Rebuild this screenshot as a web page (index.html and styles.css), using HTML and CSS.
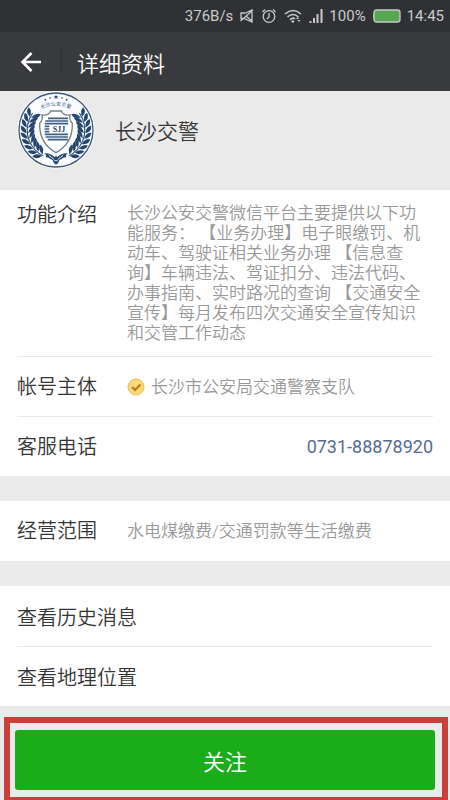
FILE: index.html
```
<!DOCTYPE html>
<html lang="zh-CN">

<head>
    <meta charset="UTF-8">
    <meta name="viewport" content="width=device-width, initial-scale=1">
    <title>详细资料</title>
    <link rel="stylesheet" href="styles.css">
</head>

<body>
    <div class="status-bar">
        <span>376B/s</span>
        <!-- mute -->
        <svg class="icon-mute" viewBox="0 0 16 16" width="16" height="16">
            <path d="M5.500 5H2v5.500h3L13 14V2L5.500 5.500M1.500 13L14 2M7.500 8.500L13 13" />
        </svg>
        <!-- alarm -->
        <svg class="icon-alarm" viewBox="0 0 16 16" width="16" height="16">
            <circle cx="8" cy="8.500" r="5.800" />
            <path d="M8 5v4L6 11M1.500 4L4 1.500M12 1.500L14.500 4" />
        </svg>
        <!-- wifi -->
        <svg class="icon-wifi" viewBox="0 0 20 16" width="20" height="16">
            <path d="M2 6Q10-1 18 6M4.500 9Q10 4 15.500 9M7 11.800Q10 9 12 11" />
            <path class="fill" d="M8 13.500l2-1.500 1.500 1.500L10 15zM13 11l1.500-2 1.500 2zM14.500 12h3L16 14z" />
        </svg>
        <!-- signal -->
        <svg class="icon-signal" viewBox="0 0 14 16" width="14" height="16">
            <path d="M1.500 15v-2M5 15v-5M8.500 15V6M12.500 15V1" />
        </svg>
        <span>100%</span>
        <!-- battery -->
        <svg class="icon-battery" viewBox="0 0 29 14" width="29" height="14">
            <path class="cap" d="M2 4Q0 7 2 10z" />
            <rect x="2" y="1" width="26" height="12" rx="2.500" />
        </svg>
        <span>14:45</span>
    </div>

    <header class="title-bar">
        <button class="back" type="button" aria-label="返回">
            <svg viewBox="0 0 22 22" width="22" height="22">
                <path d="M21 11H3M11.500 2L2.500 11l9 9" />
            </svg>
        </button>
        <h1>详细资料</h1>
    </header>

    <section class="profile">
        <svg class="avatar" viewBox="-117 -117 234 234" width="78" height="78">
            <defs>
                <g id="leaf">
                    <path d="M84 2Q78-19 62-20 63-3 84 2zM88 2Q89-18 104-22 108-4 88 2z" />
                    <path class="stem" d="M86 6V-12" />
                </g>
                <g id="branch">
                    <use href="#leaf" transform="rotate(-28)" />
                    <use href="#leaf" transform="rotate(-17)" />
                    <use href="#leaf" transform="rotate(-6)" />
                    <use href="#leaf" transform="rotate(5)" />
                    <use href="#leaf" transform="rotate(16)" />
                    <use href="#leaf" transform="rotate(27)" />
                    <use href="#leaf" transform="rotate(38)" />
                    <use href="#leaf" transform="rotate(49)" />
                    <use href="#leaf" transform="rotate(60)" />
                </g>
                <path id="arc" d="M-46-62Q0-84 46-62" />
            </defs>
            <circle class="halo" r="116" />
            <circle class="ring" r="111" />
            <use href="#branch" />
            <use href="#branch" transform="scale(-1 1)" />
            <path d="M0-106l2 5h5l-4 3 2 5-5-3-5 3 2-5-4-3h5z" />
            <circle cx="-18" cy="-96" r="2.500" />
            <circle cx="18" cy="-96" r="2.500" />
            <circle cx="-32" cy="-91" r="2.500" />
            <circle cx="32" cy="-91" r="2.500" />
            <text class="motto"><textPath href="#arc" startOffset="50%">长沙公安交警</textPath></text>
            <path class="shield" d="M-42-45Q-22-42-16-57H16Q22-42 42-45 38-32 49-20 51 40 0 68-51 40-49-20-38-32-42-45z" />
            <path class="lines" d="M-24-35H36M-32-27H36M-34-19H36M-34-11H-20M-34-3H-20M-34 5H-20M-34 13H36M-31 21H36M-25 29H36" />
            <text class="letters" x="9" y="6">SJJ</text>
            <path d="M-35 70Q-18 68-3 82L0 76 3 82Q18 68 35 70 27 76 31 82 20 81 16 88 10 87 7 98L0 104-7 98Q-10 87-16 88-20 81-31 82-27 76-35 70z" />
            <path class="vein" d="M-22 75L-5 89M22 75L5 89M-5 92H5" />
        </svg>
        <h2>长沙交警</h2>
    </section>

    <main>
        <section class="group">
            <div class="row row-intro">
                <h3>功能介绍</h3>
                <p>长沙公安交警微信平台主要提供以下功能服务： 【业务办理】电子眼缴罚、机动车、驾驶证相关业务办理 【信息查询】车辆违法、驾证扣分、违法代码、办事指南、实时路况的查询 【交通安全宣传】每月发布四次交通安全宣传知识和交管工作动态</p>
            </div>
            <div class="row">
                <h3>帐号主体</h3>
                <p class="verified">
                    <svg viewBox="0 0 18 18" width="18" height="18">
                        <circle cx="9" cy="9" r="8" />
                        <path d="M5 9l3 3 5.500-5.500" />
                    </svg>
                    长沙市公安局交通警察支队
                </p>
            </div>
            <div class="row">
                <h3>客服电话</h3>
                <a class="phone" href="tel:073188878920">0731-88878920</a>
            </div>
        </section>

        <section class="group">
            <div class="row">
                <h3>经营范围</h3>
                <p>水电煤缴费/交通罚款等生活缴费</p>
            </div>
        </section>

        <section class="group">
            <a class="row" href="#history">查看历史消息</a>
            <a class="row" href="#location">查看地理位置</a>
        </section>
    </main>

    <div class="follow">
        <button class="btn" type="button">关注</button>
    </div>
</body>

</html>
```

FILE: styles.css
```
* {
    box-sizing: border-box;
}

body {
    margin: 0;
    height: 100vh;
    overflow: hidden;
    background: #eaeaea;
    color: #353535;
    font-family: Roboto, 'Noto Sans CJK SC', sans-serif;
    font-weight: 350;
}

h1,
h2,
h3,
p {
    margin: 0;
    font-weight: 350;
}

a {
    color: inherit;
    text-decoration: none;
}

svg {
    flex: none;
    fill: none;
}

.status-bar {
    display: flex;
    align-items: center;
    justify-content: flex-end;
    gap: 6px;
    height: 32px;
    padding-right: 6px;
    background: #303135;
    color: #c9cacc;
    font-size: 15px;
    font-weight: 400;
}

.status-bar svg {
    stroke: #c9cacc;
    stroke-width: 1.3;
}

.status-bar .icon-wifi {
    stroke-width: 1.6;
}

.status-bar .icon-signal {
    stroke-width: 2;
}

.status-bar .fill,
.status-bar .cap {
    fill: #c9cacc;
    stroke: none;
}

.icon-battery rect {
    fill: #55a84f;
}

.title-bar {
    display: flex;
    align-items: center;
    height: 59px;
    background: #393a3e;
    color: #fff;
}

.back {
    display: flex;
    align-items: center;
    height: 28px;
    padding: 0 19px 0 20px;
    background: none;
    border: none;
    border-right: 1px solid #303135;
    cursor: pointer;
}

.back svg {
    stroke: #fff;
    stroke-width: 2.6;
}

h1 {
    padding-left: 15px;
    font-size: 22px;
}

.profile {
    display: flex;
    align-items: center;
    gap: 20px;
    height: 99px;
    padding: 0 17px 21px;
    overflow: hidden;
}

h2 {
    font-size: 21px;
}

.avatar {
    fill: #24466f;
}

.avatar .halo {
    fill: #fafcff;
}

.avatar .ring {
    fill: none;
    stroke: #3c5675;
    stroke-width: 4;
}

.avatar .stem {
    stroke: #24466f;
    stroke-width: 3;
}

.avatar .shield {
    fill: #fff;
    stroke: #77808a;
    stroke-width: 4;
}

.avatar .lines {
    stroke: #3f6087;
    stroke-width: 5;
}

.avatar .vein {
    fill: none;
    stroke: #dfe8f2;
    stroke-width: 3;
}

.motto {
    font-size: 15px;
    text-anchor: middle;
}

.letters {
    font-family: 'Liberation Serif', serif;
    font-size: 24px;
    font-weight: bold;
    text-anchor: middle;
}

.group {
    margin-bottom: 25px;
    padding: 0 17px;
    background: #fff;
}

.group:last-child {
    margin-bottom: 0;
}

.row {
    display: flex;
    align-items: center;
    min-height: 60px;
    font-size: 20px;
}

.row + .row {
    border-top: 1px solid #e8e8e8;
}

.row-intro {
    align-items: flex-start;
    padding: 13px 0;
}

h3 {
    flex: none;
    width: 110px;
    font-size: 20px;
    line-height: 24px;
}

.row p {
    flex: 1;
    padding-right: 4px;
    color: #999;
    font-size: 17px;
    line-height: 20px;
    text-spacing-trim: space-all;
}

.row .verified {
    display: flex;
    align-items: center;
    gap: 6px;
}

.verified circle {
    fill: #fbd978;
    stroke: #e9bd60;
}

.verified path {
    stroke: #b87a1c;
    stroke-width: 2;
}

.phone {
    margin-left: auto;
    color: #576b95;
    font-size: 18px;
    font-weight: 400;
}

.follow {
    margin: 11px 2px 0 4px;
    padding: 7px 7px 7px 5px;
    border: 6px solid #c9403b;
}

.btn {
    display: block;
    width: 100%;
    height: 60px;
    background: #1aad19;
    border: none;
    border-radius: 3px;
    color: #fff;
    font-family: inherit;
    font-size: 22px;
    font-weight: 350;
    cursor: pointer;
}
```
